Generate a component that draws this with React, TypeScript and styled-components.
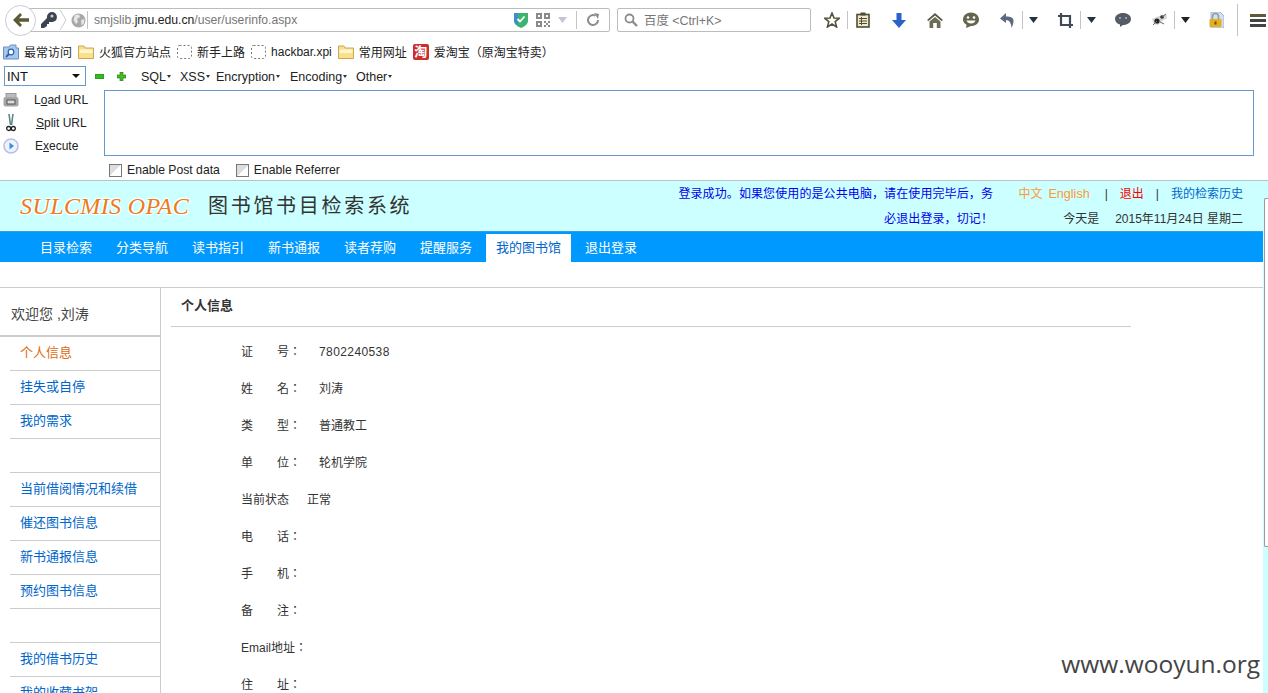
import React from 'react';
import styled, {createGlobalStyle} from 'styled-components';

const GlobalStyle = createGlobalStyle`
  html, body {
    margin: 0;
    padding: 0;
    height: 693px;
    overflow: hidden;
    background: white;
    font-family: "Liberation Sans", "Noto Sans CJK SC", sans-serif;
    font-size: 12px;
    color: #333;
  }
`;

const Page = styled.div`
  position: relative;
  width: 1268px;
  height: 693px;
  overflow: hidden;
`;

/* browser toolbar */
const Toolbar = styled.div`
  display: flex;
  align-items: center;
  height: 40px;
  padding-left: 5px;
`;
const BackButton = styled.div`
  position: relative;
  z-index: 1;
  flex: none;
  display: flex;
  align-items: center;
  justify-content: center;
  width: 29px;
  height: 29px;
  border: 1px solid #c8ccd4;
  border-radius: 50%;
  background: white;
`;
const UrlBar = styled.div`
  flex: none;
  display: flex;
  align-items: center;
  box-sizing: border-box;
  width: 589px;
  height: 24px;
  margin-left: -15px;
  padding-left: 18px;
  border: 1px solid #bcbcbc;
  border-radius: 2px;
`;
const UrlText = styled.div`
  margin-left: 6px;
  font-size: 12.2px;
  color: #777;
  white-space: nowrap;
  flex: 1;
  > b {
    font-weight: normal;
    color: #222;
  }
`;
const SearchBar = styled.div`
  flex: none;
  display: flex;
  align-items: center;
  box-sizing: border-box;
  width: 194px;
  height: 24px;
  margin: 0 6px 0 7px;
  padding-left: 6px;
  border: 1px solid #bcbcbc;
  border-radius: 2px;
  color: #777;
  font-size: 12.4px;
  white-space: nowrap;
  > span {
    margin-left: 6px;
  }
`;
const Slot = styled.div<{$w: number; $l?: number}>`
  flex: none;
  display: flex;
  align-items: center;
  justify-content: center;
  width: ${p => p.$w}px;
  margin-left: ${p => p.$l || 0}px;
`;
const Divider = styled.div<{$h?: number}>`
  flex: none;
  width: 1px;
  height: ${p => p.$h || 18}px;
  background: #c4c4c4;
`;

/* bookmarks */
const Bookmarks = styled.div`
  display: flex;
  align-items: center;
  height: 23px;
  padding-left: 3px;
`;
const Bookmark = styled.div`
  display: flex;
  align-items: center;
  gap: 5px;
  margin-right: 6px;
  color: #222;
  white-space: nowrap;
`;
const TaobaoBadge = styled.span`
  flex: none;
  width: 16px;
  height: 16px;
  border-radius: 2px;
  background: #cc2d2d;
  color: white;
  font-size: 13px;
  font-weight: bold;
  line-height: 16px;
  text-align: center;
`;

/* hackbar */
const HackMenu = styled.div`
  display: flex;
  align-items: center;
  height: 26px;
  padding-left: 4px;
  font-size: 12.5px;
  color: #222;
`;
const FakeSelect = styled.div`
  flex: none;
  display: flex;
  align-items: center;
  justify-content: space-between;
  box-sizing: border-box;
  width: 82px;
  height: 20px;
  padding: 0 5px 0 2px;
  border: 1px solid #6699cc;
  font-size: 13px;
  color: #111;
`;
const Caret = styled.i`
  width: 0;
  height: 0;
  border-left: 4px solid transparent;
  border-right: 4px solid transparent;
  border-top: 4px solid #111;
`;
const MenuItem = styled.div<{$w: number}>`
  flex: none;
  width: ${p => p.$w}px;
  margin-top: 1px;
  white-space: nowrap;
  &::after {
    content: "";
    display: inline-block;
    margin-left: 1px;
    vertical-align: 3px;
    border-left: 2px solid transparent;
    border-right: 2px solid transparent;
    border-top: 3px solid #333;
  }
`;
const HackBody = styled.div`
  display: flex;
  height: 66px;
  margin-top: 1px;
`;
const HackActions = styled.div`
  flex: none;
  width: 104px;
  margin-top: -2px;
`;
const HackAction = styled.div<{$text: number}>`
  display: flex;
  align-items: center;
  height: 23px;
  padding-left: 3px;
  color: #222;
  font-size: 12px;
  white-space: nowrap;
  > span {
    margin-left: ${p => p.$text}px;
  }
`;
const HackInput = styled.div`
  flex: none;
  box-sizing: border-box;
  width: 1150px;
  height: 66px;
  border: 1px solid #6699cc;
`;
const HackChecks = styled.div`
  display: flex;
  align-items: center;
  height: 16px;
  margin-top: 6px;
  margin-bottom: 2px;
  padding-left: 109px;
  font-size: 12.2px;
  color: #222;
`;
const Check = styled.i`
  flex: none;
  box-sizing: border-box;
  width: 13px;
  height: 13px;
  margin-right: 5px;
  border: 1px solid #777;
  background: linear-gradient(135deg, #ddd 50%, #fff 50%);
`;
const CheckLabel = styled.span`
  margin-right: 16px;
`;

/* web page */
const Site = styled.div`
  display: flex;
  border-top: 1px solid #b8c2c8;
`;
const SiteMain = styled.div`
  flex: none;
  width: 1263px;
`;
const ScrollGutter = styled.div`
  flex: 1;
  background: #ccffff;
  height: 512px;
`;
const ScrollThumb = styled.div`
  box-sizing: border-box;
  width: 100%;
  height: 349px;
  margin-top: 17px;
  margin-left: 1px;
  background: white;
  border: 1px solid #9a9a9a;
  border-right: 0;
  border-radius: 2px 0 0 2px;
`;
const Header = styled.div`
  display: flex;
  height: 50px;
  background: #ccffff;
`;
const Logo = styled.div`
  flex: none;
  width: 175px;
  margin: 13px 13px 0 20px;
  font-family: "Liberation Serif", serif;
  font-style: italic;
  font-size: 24px;
  line-height: 24px;
  letter-spacing: 0.4px;
  color: #ee7a1c;
  white-space: nowrap;
  text-shadow: 0 0 2px white, 1px 1px 1px white, -1px -1px 1px white, 1px -1px 1px white, -1px 1px 1px white;
`;
const SiteTitle = styled.div`
  flex: none;
  margin-top: 11px;
  font-size: 20px;
  line-height: 28px;
  letter-spacing: 2.7px;
  color: #333;
  white-space: nowrap;
`;
const Notice = styled.div`
  flex: none;
  width: 320px;
  margin: 0 25px 0 auto;
  padding-top: 1px;
  text-align: right;
  line-height: 25px;
  letter-spacing: 0.1px;
  color: #0000ee;
`;
const HeadTools = styled.div`
  flex: none;
  width: 225px;
  padding: 1px 20px 0 0;
  text-align: right;
  line-height: 25px;
  white-space: nowrap;
`;
const Tone = styled.span<{$c: string; $l?: number; $size?: number}>`
  color: ${p => p.$c};
  margin-left: ${p => p.$l || 0}px;
  font-size: ${p => p.$size || 12}px;
`;
const Nav = styled.div`
  display: flex;
  gap: 4px;
  box-sizing: border-box;
  height: 31px;
  padding: 2px 0 0 30px;
  background: #0099ff;
  border-top: 1px solid #3a9be0;
`;
const NavItem = styled.div<{$active?: boolean}>`
  padding: 0 10px 2px;
  font-size: 13px;
  line-height: 27px;
  color: ${p => p.$active ? '#0066cc' : 'white'};
  background: ${p => p.$active ? 'white' : 'transparent'};
`;
const Gap = styled.div`
  height: 25px;
  border-bottom: 1px solid #cccccc;
`;
const Columns = styled.div`
  display: flex;
`;
const Side = styled.div`
  flex: none;
  width: 160px;
  height: 405px;
  overflow: hidden;
  border-right: 1px solid #cccccc;
`;
const Welcome = styled.div`
  box-sizing: border-box;
  height: 49px;
  padding: 16px 0 0 11px;
  font-size: 14px;
  line-height: 20px;
  color: #444;
  border-bottom: 2px solid #cccccc;
`;
const SideItem = styled.div<{$active?: boolean}>`
  box-sizing: border-box;
  height: 34px;
  margin-left: 10px;
  padding-left: 10px;
  font-size: 13px;
  line-height: 32px;
  color: ${p => p.$active ? '#dd6a11' : '#0066cc'};
  border-bottom: 1px solid #cccccc;
`;
const Content = styled.div`
  flex: none;
  width: 960px;
  margin-left: 10px;
`;
const ContentTitle = styled.div`
  box-sizing: border-box;
  height: 39px;
  padding: 8px 0 0 10px;
  font-size: 13px;
  font-weight: bold;
  line-height: 20px;
  color: #333;
  border-bottom: 1px solid #cccccc;
`;
const InfoList = styled.div`
  margin-top: 7px;
  padding-left: 70px;
`;
const InfoRow = styled.div`
  display: flex;
  gap: 18px;
  height: 37px;
  font-family: "Liberation Sans", "Noto Sans CJK JP", sans-serif;
  line-height: 37px;
  color: #333;
  white-space: nowrap;
`;
const Digits = styled.span`
  letter-spacing: 0.4px;
`;
const Watermark = styled.div`
  position: absolute;
  right: 8px;
  top: 647px;
  font-family: "Open Sans", sans-serif;
  font-size: 24.5px;
  line-height: 33px;
  color: #444;
`;

const Back = () => (
    <svg width="18" height="16" viewBox="0 0 18 16">
        <path d="M8 1 L1 8 L8 15 L10 13 L7 9.7 H17 V6.3 H7 L10 3 Z" fill="#5b5a34"/>
    </svg>
);
const Key = () => (
    <svg width="17" height="18" viewBox="0 0 17 18">
        <path d="M1 17 L1 13 L7 7 A5 5 0 1 1 11 11 L9 11 L9 13 L7 13 L7 15 L4 17 Z" fill="#3c4450"/>
        <circle cx="12" cy="5" r="1.6" fill="#c8ccd4"/>
    </svg>
);
const Chevron = () => (
    <svg width="8" height="24" viewBox="0 0 8 24">
        <path d="M1 2 L7 12 L1 22" fill="none" stroke="#c8ccd4"/>
    </svg>
);
const Globe = () => (
    <svg width="15" height="15" viewBox="0 0 15 15">
        <circle cx="7.5" cy="7.5" r="7" fill="#a8a8a8"/>
        <path d="M4 2 L8 1.5 L9 4 L6 6 L7 9 L5 11 L2.5 7 Z M10 7 L13.5 6 L13 10 L10.5 12.5 Z" fill="#e6e6e6"/>
    </svg>
);
const Shield = () => (
    <svg width="14" height="16" viewBox="0 0 14 16">
        <path d="M0 1 H14 V9 Q14 13 7 16 Q0 13 0 9 Z" fill="#3cb371"/>
        <path d="M0 1 H4 V13 Q1 12 0 9 Z" fill="#3d8fc9"/>
        <path d="M3.5 7 L6 9.5 L10.5 4.5" fill="none" stroke="white" strokeWidth="1.8"/>
    </svg>
);
const Qr = () => (
    <svg width="14" height="14" viewBox="0 0 14 14" fill="#8a8a8a">
        <path d="M0 0 H6 V6 H0 Z M2 2 V4 H4 V2 Z M8 0 H14 V6 H8 Z M10 2 V4 H12 V2 Z M0 8 H6 V14 H0 Z M2 10 V12 H4 V10 Z M8 8 H10 V10 H8 Z M12 8 H14 V10 H12 Z M10 10 H12 V12 H10 Z M8 12 H10 V14 H8 Z M12 12 H14 V14 H12 Z" fillRule="evenodd"/>
    </svg>
);
const Down = ({c = '#c2c4dc', w = 9}: {c?: string; w?: number}) => (
    <svg width={w} height="6" viewBox="0 0 9 6">
        <path d="M0 0 H9 L4.5 6 Z" fill={c}/>
    </svg>
);
const Reload = () => (
    <svg width="14" height="14" viewBox="0 0 14 14">
        <path d="M12 7 A5 5 0 1 1 9.5 2.7" fill="none" stroke="#8c8c8c" strokeWidth="2"/>
        <path d="M8 0 L13 1 L12 6 Z" fill="#8c8c8c"/>
    </svg>
);
const Magnifier = () => (
    <svg width="14" height="14" viewBox="0 0 14 14">
        <circle cx="5.5" cy="5.5" r="4" fill="none" stroke="#8c8c8c" strokeWidth="1.8"/>
        <path d="M8.5 8.5 L13 13" stroke="#8c8c8c" strokeWidth="2.4"/>
    </svg>
);
const Star = () => (
    <svg width="16" height="16" viewBox="0 0 16 16">
        <path d="M8 1 L10 6 L15.3 6.2 L11.2 9.6 L12.6 15 L8 12 L3.4 15 L4.8 9.6 L0.7 6.2 L6 6 Z" fill="white" stroke="#55523c" strokeWidth="1.6"/>
    </svg>
);
const Clipboard = () => (
    <svg width="14" height="16" viewBox="0 0 14 16">
        <rect x="1" y="2.5" width="12" height="12.5" fill="#efe9d0" stroke="#514c30" strokeWidth="1.6"/>
        <rect x="4.5" y="0.5" width="5" height="3" fill="#514c30"/>
        <path d="M3 6.5 H11 M3 9 H11 M3 11.5 H11 M5.5 5 V13" stroke="#514c30"/>
    </svg>
);
const Download = () => (
    <svg width="14" height="15" viewBox="0 0 14 15">
        <path d="M4.5 0 H9.5 V7 H14 L7 15 L0 7 H4.5 Z" fill="#2b62c8"/>
    </svg>
);
const Home = () => (
    <svg width="16" height="15" viewBox="0 0 16 15">
        <path d="M8 0 L16 7 L14.5 8 L8 2.6 L1.5 8 L0 7 Z" fill="#5a5a44"/>
        <path d="M8 4 L13.5 8.5 V15 H9.8 V10 H6.2 V15 H2.5 V8.5 Z" fill="#6c6c58"/>
    </svg>
);
const Smile = () => (
    <svg width="16" height="16" viewBox="0 0 16 16">
        <path d="M8 0.5 C12.5 0.5 16 3.4 16 7.5 C16 11.6 12.5 14 8 14 L3 16 L3.6 12.8 C1.2 11.6 0 9.6 0 7.5 C0 3.4 3.5 0.5 8 0.5 Z" fill="#666650"/>
        <circle cx="5" cy="5.5" r="1.3" fill="white"/>
        <circle cx="11" cy="5.5" r="1.3" fill="white"/>
        <path d="M3.5 8.5 H12.5 Q11.5 11.5 8 11.5 Q4.5 11.5 3.5 8.5 Z" fill="white"/>
    </svg>
);
const Undo = () => (
    <svg width="15" height="15" viewBox="0 0 15 15">
        <path d="M6 0 L0 5.5 L6 10 V7 Q11 7 11.5 15 Q15 8 12.5 5 Q10.5 3 6 3.5 Z" fill="#5a6a80"/>
    </svg>
);
const Crop = () => (
    <svg width="15" height="15" viewBox="0 0 15 15" fill="none" stroke="#3f4a56" strokeWidth="2.2">
        <path d="M3 0 V12 H15 M0 3 H12 V15"/>
    </svg>
);
const Chat = () => (
    <svg width="16" height="14" viewBox="0 0 16 14">
        <path d="M8 0 C12.5 0 16 2.4 16 6 C16 9.6 12.5 12 8 12 L5 14 L5 11.5 C2 10.8 0 8.6 0 6 C0 2.4 3.5 0 8 0 Z" fill="#555c66"/>
        <circle cx="5" cy="5" r="1.1" fill="#aab"/>
        <circle cx="11" cy="5" r="1.1" fill="#aab"/>
    </svg>
);
const Bug = () => (
    <svg width="17" height="14" viewBox="0 0 17 14">
        <path d="M1 6 L8 3 L15 1 L16 5 L11 8 L7 12 L3 11 Z" fill="#d4d4d4"/>
        <circle cx="6" cy="8" r="2.6" fill="#222"/>
        <circle cx="11" cy="4" r="1.8" fill="#333"/>
        <path d="M2 12 L6 8 M11 4 L15 1 M9 9 L13 11" stroke="#666"/>
    </svg>
);
const Lock = () => (
    <svg width="15" height="16" viewBox="0 0 15 16">
        <path d="M2 0 H11 L15 4 V16 H2 Z" fill="#cfe0f4" stroke="#9db8dc"/>
        <path d="M3.5 7 V4.5 A3 3 0 0 1 9.5 4.5 V7" fill="none" stroke="#9a9a9a" strokeWidth="1.6"/>
        <rect x="0.5" y="7" width="12" height="8" rx="1" fill="#e2b020"/>
        <rect x="5.5" y="9.5" width="2" height="3" fill="#705000"/>
    </svg>
);
const Hamburger = () => (
    <svg width="16" height="13" viewBox="0 0 16 13">
        <path d="M0 0 H16 V3 H0 Z" fill="#5f5a3a"/>
        <path d="M0 5 H16 V8 H0 Z M0 10 H16 V13 H0 Z" fill="#444"/>
    </svg>
);
const SearchFolder = () => (
    <svg width="16" height="16" viewBox="0 0 16 16">
        <path d="M0.5 3 H6 L7.5 1 H13 V4 H15.5 V15 H0.5 Z" fill="#a6c8f0" stroke="#6a8fc0"/>
        <circle cx="8" cy="8" r="2.8" fill="white" stroke="#2a62b0" strokeWidth="1.2"/>
        <path d="M6 10 L3 13" stroke="#2a62b0" strokeWidth="1.8"/>
    </svg>
);
const Folder = () => (
    <svg width="16" height="16" viewBox="0 0 16 16">
        <path d="M0.5 4 V2 H6 L7 4 H15.5 V14.5 H0.5 Z" fill="#fbe08c" stroke="#c8a850"/>
        <path d="M1.5 5.5 H14.5 V9 H1.5 Z" fill="#fff6d0"/>
    </svg>
);
const Blank = () => (
    <svg width="15" height="14" viewBox="0 0 15 14">
        <rect x="0.5" y="0.5" width="14" height="13" rx="2" fill="none" stroke="#777" strokeDasharray="2 2"/>
    </svg>
);
const Minus = () => (
    <svg width="9" height="5" viewBox="0 0 9 5">
        <rect width="9" height="5" rx="1" fill="#33bb22" stroke="#227711" strokeWidth="0.8"/>
    </svg>
);
const Plus = () => (
    <svg width="9" height="9" viewBox="0 0 9 9">
        <path d="M3 0 H6 V3 H9 V6 H6 V9 H3 V6 H0 V3 H3 Z" fill="#44bb22" stroke="#227711" strokeWidth="0.6"/>
    </svg>
);
const Printer = () => (
    <svg width="16" height="14" viewBox="0 0 16 14">
        <rect x="3" y="0.5" width="10" height="4" fill="#bbb" stroke="#999"/>
        <rect x="0.5" y="4" width="15" height="9.5" rx="2" fill="#a6a6a6"/>
        <rect x="4" y="7" width="8" height="4" fill="#ddd" stroke="#555"/>
    </svg>
);
const Scissors = () => (
    <svg width="10" height="18" viewBox="0 0 10 18">
        <path d="M3 0 L4.5 11 M7 0 L5.5 11" stroke="#5a8a8a" strokeWidth="1.6"/>
        <circle cx="2.7" cy="14.5" r="2" fill="none" stroke="#222" strokeWidth="1.3"/>
        <circle cx="7.3" cy="14.5" r="2" fill="none" stroke="#222" strokeWidth="1.3"/>
    </svg>
);
const Play = () => (
    <svg width="16" height="16" viewBox="0 0 16 16">
        <circle cx="8" cy="8" r="7" fill="#eef2fc" stroke="#b8c0e8" strokeWidth="1.6"/>
        <path d="M6.5 4.5 L11 8 L6.5 11.5 Z" fill="#3a8fd8"/>
    </svg>
);

const sideItems = [
    {text: '个人信息', active: true},
    {text: '挂失或自停'},
    {text: '我的需求'},
    {text: ''},
    {text: '当前借阅情况和续借'},
    {text: '催还图书信息'},
    {text: '新书通报信息'},
    {text: '预约图书信息'},
    {text: ''},
    {text: '我的借书历史'},
    {text: '我的收藏书架'},
];

const navItems = ['目录检索', '分类导航', '读书指引', '新书通报', '读者荐购', '提醒服务', '我的图书馆', '退出登录'];

const infoRows = [
    ['证　　号：', '7802240538'],
    ['姓　　名：', '刘涛'],
    ['类　　型：', '普通教工'],
    ['单　　位：', '轮机学院'],
    ['当前状态', '正常'],
    ['电　　话：', ''],
    ['手　　机：', ''],
    ['备　　注：', ''],
    ['Email地址：', ''],
    ['住　　址：', ''],
];

function App() {
    return (
        <Page>
            <GlobalStyle/>
            <Toolbar>
                <BackButton><Back/></BackButton>
                <UrlBar>
                    <Slot $w={17}><Key/></Slot>
                    <Slot $w={12}><Chevron/></Slot>
                    <Slot $w={18}><Globe/></Slot>
                    <Divider/>
                    <UrlText>smjslib.<b>jmu.edu.cn</b>/user/userinfo.aspx</UrlText>
                    <Slot $w={14}><Shield/></Slot>
                    <Slot $w={30}><Qr/></Slot>
                    <Slot $w={9}><Down/></Slot>
                    <Slot $w={9}/>
                    <Divider/>
                    <Slot $w={32}><Reload/></Slot>
                </UrlBar>
                <SearchBar>
                    <Magnifier/>
                    <span>百度 &lt;Ctrl+K&gt;</span>
                </SearchBar>
                <Slot $w={30}><Star/></Slot>
                <Divider/>
                <Slot $w={30}><Clipboard/></Slot>
                <Slot $w={36} $l={3}><Download/></Slot>
                <Slot $w={36}><Home/></Slot>
                <Slot $w={36}><Smile/></Slot>
                <Slot $w={30} $l={3}><Undo/></Slot>
                <Divider/>
                <Slot $w={20}><Down c="#223344"/></Slot>
                <Slot $w={30} $l={7}><Crop/></Slot>
                <Divider/>
                <Slot $w={20}><Down c="#223344"/></Slot>
                <Slot $w={44}><Chat/></Slot>
                <Slot $w={29}><Bug/></Slot>
                <Divider/>
                <Slot $w={20}><Down c="#222"/></Slot>
                <Slot $w={42}><Lock/></Slot>
                <Divider $h={32}/>
                <Slot $w={20} $l={10}><Hamburger/></Slot>
            </Toolbar>
            <Bookmarks>
                <Bookmark><SearchFolder/>最常访问</Bookmark>
                <Bookmark><Folder/>火狐官方站点</Bookmark>
                <Bookmark><Blank/>新手上路</Bookmark>
                <Bookmark><Blank/>hackbar.xpi</Bookmark>
                <Bookmark><Folder/>常用网址</Bookmark>
                <Bookmark><TaobaoBadge>淘</TaobaoBadge>爱淘宝（原淘宝特卖）</Bookmark>
            </Bookmarks>
            <HackMenu>
                <FakeSelect>INT<Caret/></FakeSelect>
                <Slot $w={26}><Minus/></Slot>
                <Slot $w={18}><Plus/></Slot>
                <Slot $w={11}/>
                <MenuItem $w={39}>SQL</MenuItem>
                <MenuItem $w={36}>XSS</MenuItem>
                <MenuItem $w={74}>Encryption</MenuItem>
                <MenuItem $w={66}>Encoding</MenuItem>
                <MenuItem $w={50}>Other</MenuItem>
            </HackMenu>
            <HackBody>
                <HackActions>
                    <HackAction $text={15}><Slot $w={16}><Printer/></Slot><span>L<u>o</u>ad URL</span></HackAction>
                    <HackAction $text={17}><Slot $w={16}><Scissors/></Slot><span><u>S</u>plit URL</span></HackAction>
                    <HackAction $text={16}><Slot $w={16}><Play/></Slot><span>E<u>x</u>ecute</span></HackAction>
                </HackActions>
                <HackInput/>
            </HackBody>
            <HackChecks>
                <Check/><CheckLabel>Enable Post data</CheckLabel>
                <Check/><CheckLabel>Enable Referrer</CheckLabel>
            </HackChecks>
            <Site>
                <SiteMain>
                    <Header>
                        <Logo>SULCMIS OPAC</Logo>
                        <SiteTitle>图书馆书目检索系统</SiteTitle>
                        <Notice>登录成功。如果您使用的是公共电脑，请在使用完毕后，务必退出登录，切记！</Notice>
                        <HeadTools>
                            <Tone $c="#ff9933">中文</Tone>
                            <Tone $c="#ff9933" $l={6} $size={12.6}>English</Tone>
                            <Tone $c="#333" $l={15}>|</Tone>
                            <Tone $c="#ff0000" $l={12}>退出</Tone>
                            <Tone $c="#333" $l={12}>|</Tone>
                            <Tone $c="#0066cc" $l={12}>我的检索历史</Tone>
                            <br/>
                            <Tone $c="#333">今天是</Tone>
                            <Tone $c="#333" $l={16}>2015年11月24日 星期二</Tone>
                        </HeadTools>
                    </Header>
                    <Nav>
                        {navItems.map(item => (
                            <NavItem key={item} $active={item === '我的图书馆'}>{item}</NavItem>
                        ))}
                    </Nav>
                    <Gap/>
                    <Columns>
                        <Side>
                            <Welcome>欢迎您 ,刘涛</Welcome>
                            {sideItems.map((item, i) => (
                                <SideItem key={i} $active={item.active}>{item.text}</SideItem>
                            ))}
                        </Side>
                        <Content>
                            <ContentTitle>个人信息</ContentTitle>
                            <InfoList>
                                {infoRows.map(([label, value]) => (
                                    <InfoRow key={label}>
                                        <span>{label}</span>
                                        {label.startsWith('证') ? <Digits>{value}</Digits> : <span>{value}</span>}
                                    </InfoRow>
                                ))}
                            </InfoList>
                        </Content>
                    </Columns>
                </SiteMain>
                <ScrollGutter>
                    <ScrollThumb/>
                </ScrollGutter>
            </Site>
            <Watermark>www.wooyun.org</Watermark>
        </Page>
    );
}

export default App;
